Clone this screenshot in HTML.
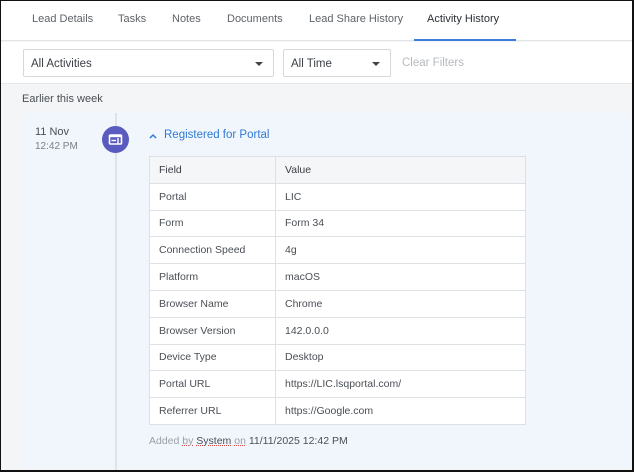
<!DOCTYPE html>
<html><head><style>
*{margin:0;padding:0;box-sizing:border-box}
body{width:634px;height:472px;overflow:hidden;font-family:"Liberation Sans",sans-serif;background:#fff}
.frame{position:absolute;left:0;top:0;width:634px;height:472px;border:1px solid #111;border-left-width:1px;border-right-width:2px;border-bottom-width:2px;overflow:hidden;background:#f4f5f6}
.tabs{position:absolute;left:0;top:0;width:100%;height:40px;background:#fff;border-bottom:1px solid #e3e5e8}
.tab{position:absolute;top:12px;font-size:11px;color:#5f6368}
.tab.act{color:#2b2f36}
.ul{position:absolute;left:341px;top:38px;width:83px;height:2px;background:#3b7ddd}
.filters{position:absolute;left:0;top:41px;width:100%;height:42px;background:#fff;border-bottom:1px solid #e6e8eb}
.sel{position:absolute;top:7px;height:28px;border:1px solid #d5d8dc;border-radius:2px;background:#fff;font-size:11.5px;color:#3a3f45;padding:8px 7px}
.sel i{position:absolute;right:10px;top:12px;width:0;height:0;border-left:4px solid transparent;border-right:4px solid transparent;border-top:4px solid #444}
.clear{position:absolute;left:401px;top:15px;font-size:11.5px;color:#b5b9be}
.ew{position:absolute;left:21px;top:92px;font-size:11px;color:#4a4f55}
.card{position:absolute;left:22px;top:112px;width:610px;height:355px;background:#f1f6fd}
.line{position:absolute;left:114px;top:112px;width:2px;height:360px;background:#dfe3e8}
.date{position:absolute;left:34px;top:125px;font-size:11px;color:#4a4f55}
.time{position:absolute;left:34px;top:140px;font-size:10px;color:#7a7f85}
.ico{position:absolute;left:101px;top:125px;width:27px;height:27px;border-radius:50%;background:#5a5bbf}
.title{position:absolute;left:148px;top:128px;font-size:11.5px;color:#2f7ad6}
table{position:absolute;left:148px;top:155px;width:377px;border-collapse:collapse;background:#fff;font-size:10.5px;color:#4a4f55}
td{border:1px solid #dde1e5;height:26.8px;padding:0 9px}
tr:first-child td{background:#f5f6f7;color:#3a3f45}
td:first-child{width:126px}
.foot{position:absolute;left:148px;top:434px;font-size:10.5px;color:#9aa0a6}
.foot b{font-weight:normal;color:#4a4f55}
.foot u{text-decoration:underline dotted #d44}
</style></head><body><div class="frame">
<div class="tabs">
<span class="tab" style="left:31px">Lead Details</span>
<span class="tab" style="left:117px">Tasks</span>
<span class="tab" style="left:171px">Notes</span>
<span class="tab" style="left:226px">Documents</span>
<span class="tab" style="left:308px">Lead Share History</span>
<span class="tab act" style="left:426px">Activity History</span>
<div class="ul" style="left:413px;width:102px"></div>
</div>
<div class="filters">
<div class="sel" style="left:22px;width:251px">All Activities<i></i></div>
<div class="sel" style="left:282px;width:108px">All Time<i></i></div>
<span class="clear">Clear Filters</span>
</div>
<div class="ew">Earlier this week</div>
<div class="card"></div>
<div class="line"></div>
<div class="date">11 Nov</div>
<div class="time">12:42 PM</div>
<div class="ico"><svg width="27" height="27" viewBox="0 0 27 27"><rect x="7.5" y="9" width="12" height="9" rx="1" fill="none" stroke="#fff" stroke-width="1.6"/><rect x="7.5" y="9" width="12" height="2.2" fill="#fff"/><line x1="9.5" y1="14.5" x2="14" y2="14.5" stroke="#fff" stroke-width="1.4"/><line x1="16" y1="12" x2="16" y2="18" stroke="#fff" stroke-width="1.4"/></svg></div>
<div class="title"><span style="display:inline-block;width:8px;height:8px;position:relative;top:1px;margin-right:7px"><svg width="8" height="6" viewBox="0 0 8 6"><path d="M1 5L4 2L7 5" fill="none" stroke="#2f7ad6" stroke-width="1.5"/></svg></span>Registered for Portal</div>
<table>
<tr><td>Field</td><td>Value</td></tr>
<tr><td>Portal</td><td>LIC</td></tr>
<tr><td>Form</td><td>Form 34</td></tr>
<tr><td>Connection Speed</td><td>4g</td></tr>
<tr><td>Platform</td><td>macOS</td></tr>
<tr><td>Browser Name</td><td>Chrome</td></tr>
<tr><td>Browser Version</td><td>142.0.0.0</td></tr>
<tr><td>Device Type</td><td>Desktop</td></tr>
<tr><td>Portal URL</td><td>https://LIC.lsqportal.com/</td></tr>
<tr><td>Referrer URL</td><td>https://Google.com</td></tr>
</table>
<div class="foot">Added <u>by</u> <b><u>System</u></b> <u>on</u> <b>11/11/2025 12:42 PM</b></div>
</div></body></html>
